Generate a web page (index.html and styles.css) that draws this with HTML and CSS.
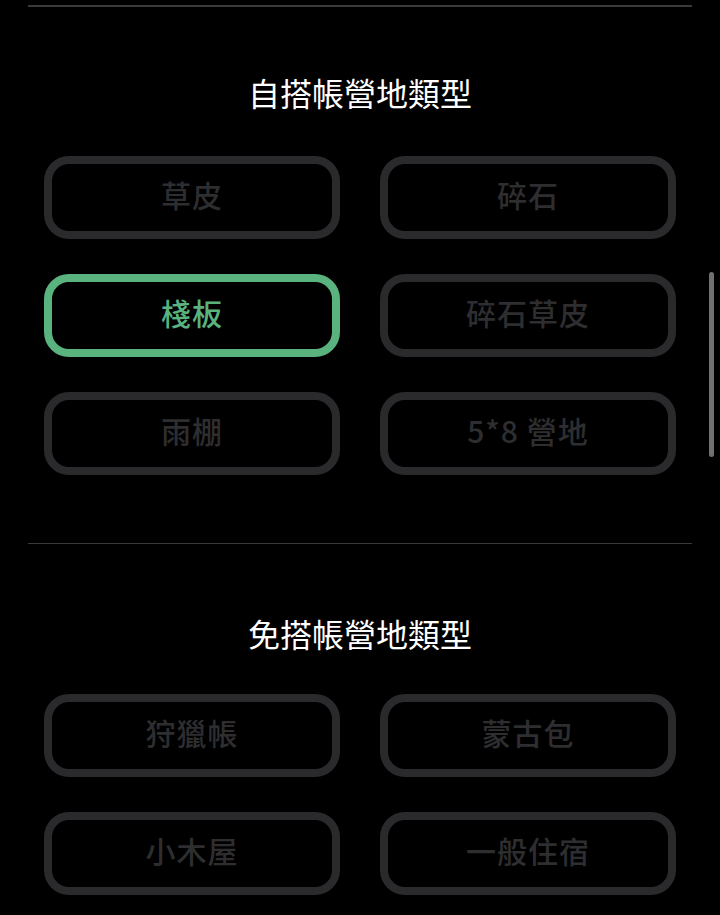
FILE: index.html
```html
<!DOCTYPE html>
<html lang="zh-Hant">
<head>
    <meta charset="UTF-8">
    <meta name="viewport" content="width=device-width, initial-scale=1.0">
    <title>營地類型</title>
    <link rel="stylesheet" href="styles.css">
</head>
<body>
    <div class="page">
        <div class="rule rule-top"></div>

        <section class="group group-first">
            <h2>自搭帳營地類型</h2>
            <div class="options">
                <button class="option">草皮</button>
                <button class="option">碎石</button>
                <button class="option active">棧板</button>
                <button class="option">碎石草皮</button>
                <button class="option">雨棚</button>
                <button class="option">5*8 營地</button>
            </div>
        </section>

        <div class="rule"></div>

        <section class="group">
            <h2>免搭帳營地類型</h2>
            <div class="options">
                <button class="option">狩獵帳</button>
                <button class="option">蒙古包</button>
                <button class="option">小木屋</button>
                <button class="option">一般住宿</button>
            </div>
        </section>
    </div>

    <div class="scrollbar"></div>
</body>
</html>
```

FILE: styles.css
```css
* {
    margin: 0;
    padding: 0;
    box-sizing: border-box;
}

body {
    background: #000;
    font-family: "Noto Sans CJK TC", "Noto Sans", sans-serif;
    overflow: hidden;
}

.page {
    padding: 5px 28px 0;
}

.rule {
    height: 1px;
    background: #3a3a3c;
}

.rule-top {
    height: 2px;
}

.group {
    padding: 0 16px 68px;
}

h2 {
    margin: 68px 0 40px;
    color: #fff;
    font-size: 32px;
    font-weight: 400;
    line-height: 42px;
    text-align: center;
}

.group-first h2 {
    margin: 64px 0 43px;
}

.options {
    display: grid;
    grid-template-columns: 1fr 1fr;
    column-gap: 40px;
    row-gap: 35px;
}

.option {
    height: 83px;
    padding-bottom: 8px;
    border: 8px solid #2a2a2c;
    border-radius: 25px;
    background: transparent;
    color: #2e2e30;
    font-family: inherit;
    font-size: 30px;
    font-weight: 500;
    letter-spacing: 1px;
}

.option.active {
    border-color: #5ab27f;
    color: #5ab27f;
}

.scrollbar {
    position: fixed;
    top: 272px;
    right: 6px;
    width: 5px;
    height: 185px;
    border-radius: 3px;
    background: #707072;
}
```
